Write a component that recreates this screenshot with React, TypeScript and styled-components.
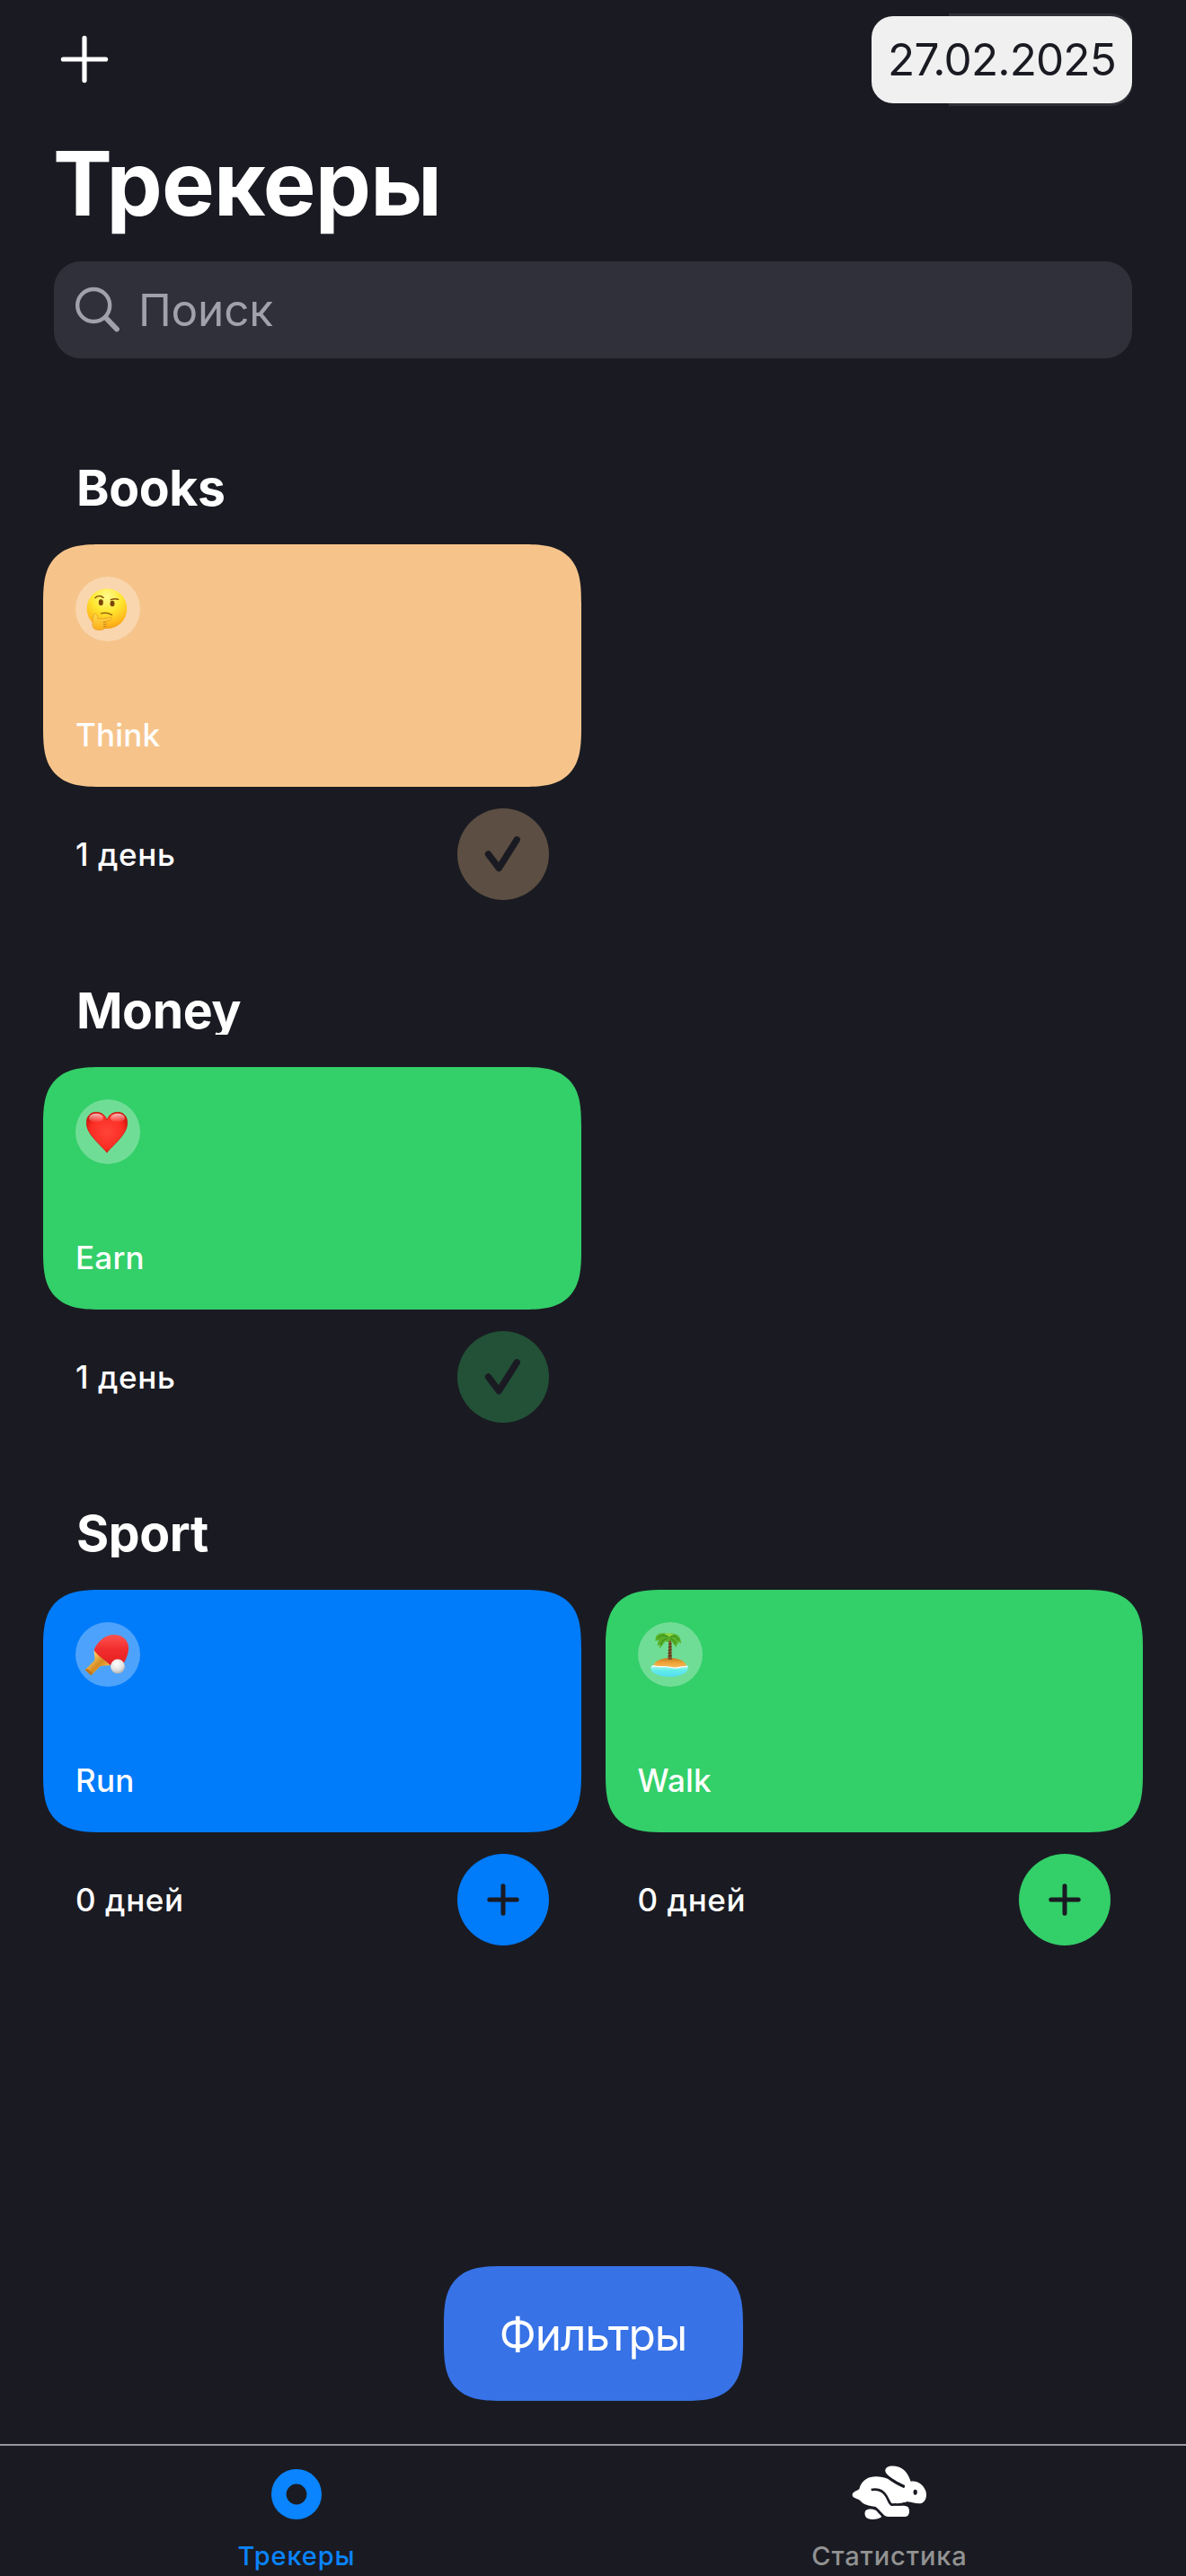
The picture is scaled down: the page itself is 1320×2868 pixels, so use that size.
import React from 'react';
import styled, { createGlobalStyle, css } from 'styled-components';

const colors = {
  background: '#1a1b22',
  field: '#30303a',
  hint: '#a1a1ab',
  white: '#ffffff',
  blue: '#007bfa',
  green: '#33cf69',
  peach: '#f6c48b',
};

const GlobalStyle = createGlobalStyle`
  body {
    margin: 0;
    background: ${colors.background};
  }
  button {
    border: 0;
    padding: 0;
    font: inherit;
  }
`;

const smoothCorners = css`
  border-radius: 48px;
  @supports (corner-shape: squircle) {
    border-radius: 66px;
    corner-shape: superellipse(1.54);
  }
`;

const Screen = styled.div`
  box-sizing: border-box;
  width: 1320px;
  height: 2868px;
  display: flex;
  flex-direction: column;
  overflow: hidden;
  background: ${colors.background};
  color: ${colors.white};
  font-family: Inter, 'Liberation Sans', sans-serif;
`;

const Header = styled.header`
  padding: 15px 60px 0;
`;

const NavBar = styled.div`
  display: flex;
  justify-content: space-between;
  height: 103px;
`;

const AddButton = styled.button`
  width: 68px;
  height: 102px;
  display: flex;
  align-items: center;
  justify-content: center;
  background: none;
`;

const DatePicker = styled.div`
  display: flex;
  align-items: center;
  width: 290px;
  border-radius: 24px;
  background: linear-gradient(${colors.field}, ${colors.field}) right / 204px 100% no-repeat;
`;

const DateValue = styled.time`
  flex: 1;
  height: 97px;
  border-radius: 24px;
  background: #f0f0f0;
  color: ${colors.background};
  font-size: 49.5px;
  line-height: 97px;
  letter-spacing: -0.85px;
  text-align: center;
  white-space: nowrap;
`;

const Title = styled.h1`
  margin: 26px 0 0 -1px;
  font-size: 98.8px;
  font-weight: 700;
  line-height: 120px;
  letter-spacing: -0.8px;
  white-space: nowrap;
`;

const SearchField = styled.div`
  display: flex;
  align-items: center;
  height: 108px;
  margin-top: 27px;
  padding-left: 22px;
  border-radius: 30px;
  background: ${colors.field};
  color: ${colors.hint};
`;

const SearchHint = styled.span`
  margin-left: 18px;
  font-size: 49.5px;
  line-height: 60px;
  letter-spacing: -0.2px;
`;

const Sections = styled.main`
  flex: 1;
  display: flex;
  flex-direction: column;
  gap: 96px;
  padding: 117px 48px 0;
`;

const SectionTitle = styled.h2`
  height: 54px;
  margin: 0 0 36px;
  padding-left: 37px;
  overflow: hidden;
  font-size: 55.3px;
  font-weight: 700;
  line-height: 54px;
  letter-spacing: -0.4px;
`;

const Grid = styled.div`
  display: grid;
  grid-template-columns: 1fr 1fr;
  column-gap: 27px;
`;

const Card = styled.div<{ $color: string }>`
  box-sizing: border-box;
  height: 270px;
  padding: 36px;
  display: flex;
  flex-direction: column;
  justify-content: space-between;
  align-items: flex-start;
  background: ${(p) => p.$color};
  ${smoothCorners}
`;

const EmojiBadge = styled.div`
  width: 72px;
  height: 72px;
  border-radius: 50%;
  background: rgba(255, 255, 255, 0.3);
  svg {
    display: block;
  }
`;

const CardName = styled.span`
  font-size: 35px;
  font-weight: 500;
  line-height: 43px;
  letter-spacing: 0.2px;
`;

const CardFooter = styled.div`
  display: flex;
  align-items: center;
  justify-content: space-between;
  margin-top: 24px;
  padding: 0 36px;
`;

const DayCount = styled.span`
  font-size: 35px;
  font-weight: 500;
  line-height: 43px;
  letter-spacing: 0.6px;
`;

const RoundButton = styled.button<{ $color: string; $done?: boolean }>`
  width: 102px;
  height: 102px;
  border-radius: 50%;
  background: ${(p) => (p.$done ? `color-mix(in srgb, ${p.$color} 30%, ${colors.background})` : p.$color)};
  svg {
    display: block;
  }
`;

const FilterButton = styled.button`
  box-sizing: border-box;
  align-self: center;
  width: 333px;
  height: 150px;
  margin-bottom: 48px;
  padding-top: 2px;
  background: #3772e7;
  color: ${colors.white};
  font-size: 49.5px;
  line-height: 60px;
  letter-spacing: -1.1px;
  ${smoothCorners}
`;

const TabBar = styled.nav`
  box-sizing: border-box;
  height: 147px;
  display: grid;
  grid-template-columns: 1fr 1fr;
  border-top: 2px solid #97979b;
`;

const Tab = styled.div<{ $active?: boolean }>`
  display: flex;
  flex-direction: column;
  align-items: center;
  padding-top: 19px;
  color: ${(p) => (p.$active ? '#0a84ff' : '#929292')};
`;

const TabLabel = styled.span`
  margin-top: 16px;
  font-size: 29px;
  font-weight: 500;
  line-height: 36px;
  letter-spacing: 0.9px;
`;

const PlusIcon = ({ size, arm, stroke, color }: { size: number; arm: number; stroke: number; color: string }) => (
  <svg width={size} height={size} viewBox={`${-size / 2} ${-size / 2} ${size} ${size}`}>
    <path d={`M${-arm} 0H${arm}M0 ${-arm}V${arm}`} stroke={color} strokeWidth={stroke} strokeLinecap="round" />
  </svg>
);

const CheckIcon = () => (
  <svg width="102" height="102" viewBox="0 0 102 102" fill="none">
    <path
      d="M34.5 51L46.3 66.5L66.3 34.8"
      stroke={colors.background}
      strokeWidth="7.4"
      strokeLinecap="round"
      strokeLinejoin="round"
    />
  </svg>
);

const SearchIcon = () => (
  <svg width="54" height="54" viewBox="0 0 54 54" fill="none" stroke={colors.hint} strokeLinecap="round">
    <circle cx="22.2" cy="22" r="18" strokeWidth="4.4" />
    <path d="M35.5 35.5L48 48.5" strokeWidth="5.8" />
  </svg>
);

const ThinkingEmoji = () => (
  <svg width="72" height="72" viewBox="72 66 216 216" fill="none">
    <defs>
      <radialGradient id="face" cx="0.5" cy="0.2" r="0.85">
        <stop offset="0" stopColor="#fffb8f" />
        <stop offset="0.45" stopColor="#ffe62f" />
        <stop offset="0.8" stopColor="#ffb81c" />
        <stop offset="1" stopColor="#ef9314" />
      </radialGradient>
      <linearGradient id="hand" x1="0" y1="0" x2="0" y2="1">
        <stop offset="0" stopColor="#ffdc4a" />
        <stop offset="1" stopColor="#fbae1e" />
      </linearGradient>
    </defs>
    <circle cx="177" cy="173" r="67" fill="url(#face)" />
    <ellipse cx="157" cy="152" rx="7.5" ry="10" fill="#7a4508" />
    <ellipse cx="195" cy="156" rx="7.5" ry="10" fill="#7a4508" />
    <path d="M138 137C144 129 157 129 165 136M190 143C198 140 208 139 215 142" stroke="#8a5209" strokeWidth="4.5" strokeLinecap="round" />
    <path d="M157 189C168 186 182 187 194 194" stroke="#8a5209" strokeWidth="3.5" strokeLinecap="round" />
    <path
      d="M136 190C142 188 145 196 147 206C158 208 174 205 187 202C194 201 194 208 187 211L172 217C176 222 174 229 173 234C170 243 158 245 146 244C134 243 129 236 129 225C129 211 131 192 136 190Z"
      fill="url(#hand)"
      stroke="#e6921a"
      strokeWidth="2"
    />
    <path d="M172 217L164 219M174 225L165 226M173 233L165 233" stroke="#b86d10" strokeWidth="2.5" />
  </svg>
);

const HeartEmoji = () => (
  <svg width="72" height="72" viewBox="72 72 216 216">
    <defs>
      <radialGradient id="heart" cx="0.5" cy="0.48" r="0.58">
        <stop offset="0" stopColor="#ff4439" />
        <stop offset="0.7" stopColor="#fb2d23" />
        <stop offset="1" stopColor="#d0130c" />
      </radialGradient>
      <linearGradient id="shine" x1="0" y1="0" x2="0" y2="1">
        <stop offset="0" stopColor="#fff" stopOpacity="0.7" />
        <stop offset="1" stopColor="#fff" stopOpacity="0" />
      </linearGradient>
    </defs>
    <path
      d="M177 250C170 239 146 219 128 196C116 180 109 167 109 149C109 129 122 115 141 115C158 115 171 124 177 141C183 124 196 115 213 115C232 115 245 129 245 149C245 167 238 180 226 196C208 219 184 239 177 250Z"
      fill="url(#heart)"
      stroke="#c41109"
      strokeWidth="2"
    />
    <ellipse cx="141" cy="134" rx="24" ry="15" fill="url(#shine)" />
    <ellipse cx="213" cy="134" rx="24" ry="15" fill="url(#shine)" />
  </svg>
);

const PingPongEmoji = () => (
  <svg width="72" height="72" viewBox="72 78 216 216">
    <defs>
      <linearGradient id="rubber" x1="0" y1="0" x2="0" y2="1">
        <stop offset="0" stopColor="#ff5350" />
        <stop offset="0.5" stopColor="#f02c2c" />
        <stop offset="1" stopColor="#e62020" />
      </linearGradient>
      <linearGradient id="grip" x1="0" y1="0" x2="1" y2="1">
        <stop offset="0.2" stopColor="#ffd66a" />
        <stop offset="0.55" stopColor="#d48a22" />
        <stop offset="0.8" stopColor="#ffb83e" />
      </linearGradient>
      <radialGradient id="ball" cx="0.42" cy="0.3" r="0.75">
        <stop offset="0" stopColor="#ffffff" />
        <stop offset="0.6" stopColor="#e2e2e2" />
        <stop offset="1" stopColor="#a8a8a8" />
      </radialGradient>
    </defs>
    <path d="M134 172L188 222C176 224 162 222 154 226L125 256L104 238L134 208C139 200 134 188 134 172Z" fill="url(#grip)" />
    <path d="M104 238L110 233L130 249L124 256Z" fill="#bd741c" />
    <path
      d="M134 172C144 142 172 120 202 120C236 121 252 146 249 170C248 184 241 202 234 214L188 221C174 208 145 190 134 172Z"
      fill="url(#rubber)"
    />
    <circle cx="213" cy="226" r="24" fill="url(#ball)" />
  </svg>
);

const IslandEmoji = () => (
  <svg width="72" height="72" viewBox="60 78 216 216" fill="none">
    <defs>
      <linearGradient id="sea" x1="0" y1="0" x2="0" y2="1">
        <stop offset="0" stopColor="#c9f8e6" />
        <stop offset="0.5" stopColor="#63edea" />
        <stop offset="1" stopColor="#52dcf2" />
      </linearGradient>
      <linearGradient id="sand" x1="0" y1="0" x2="0" y2="1">
        <stop offset="0" stopColor="#c97e22" />
        <stop offset="0.5" stopColor="#f0a53a" />
        <stop offset="1" stopColor="#f8bd5e" />
      </linearGradient>
    </defs>
    <path d="M102 231C104 222 112 218 166 218C218 218 226 222 228 231C226 249 200 260 165 260C130 260 104 249 102 231Z" fill="url(#sea)" />
    <path d="M112 222C118 206 142 198 166 198C192 198 216 206 221 222C216 232 204 226 194 230C180 234 170 228 156 226C140 224 124 230 112 222Z" fill="url(#sand)" />
    <path d="M106 227C116 221 124 228 138 227C154 225 168 228 180 231C194 232 200 227 212 227C219 228 224 226 226 224" stroke="#fff" strokeWidth="3.5" />
    <path d="M161 134C166 150 160 176 161 203H174C171 180 175 154 170 134Z" fill="#80532b" />
    <path d="M162 152L172 150M161 162L172 160M161 172L172 170M161 182L172 180M161 192L173 190" stroke="#4d2e16" strokeWidth="3" />
    <path
      d="M162 120C148 112 132 114 123 122C117 128 121 136 117 141C124 139 128 138 130 137C125 145 126 154 125 158L134 152L131 166C140 160 146 148 152 142L160 145L167 139L175 145C178 152 182 156 189 162L189 151L195 154L193 142L204 150C204 138 201 126 190 120C180 114 168 114 162 120Z"
      fill="#58b129"
    />
    <path d="M160 128C148 120 136 121 128 132M158 133C147 134 140 142 136 154M167 128C178 121 190 126 197 139M168 134C176 135 182 142 186 150" stroke="#2b7716" strokeWidth="2.4" />
    <path d="M148 117C160 114 172 116 180 118L166 127Z" fill="#92d63a" />
  </svg>
);

const TrackersIcon = () => (
  <svg width="70" height="70" viewBox="-35 -35 70 70">
    <circle r="19.7" fill="none" stroke="#0a84ff" strokeWidth="16.6" />
  </svg>
);

const RabbitIcon = () => (
  <svg width="88" height="70" viewBox="256 96 264 210" fill="none">
    <path
      d="M264 203C264 194 278 190 287 184C292 162 308 143 340 142C372 141 390 152 418 170L436 180L440 172C420 162 376 140 374 124C372 107 396 102 420 110C442 118 452 138 459 158C482 156 500 168 509 190C515 210 507 232 486 232C470 232 456 224 444 226C436 234 424 238 400 237C424 240 440 236 450 244C458 256 454 276 440 276L384 276C366 276 358 252 340 242C320 240 300 236 290 222C282 214 264 214 264 203Z"
      fill="#fff"
    />
    <path d="M308 256C314 249 334 249 344 256C352 266 359 271 362 276C354 284 330 287 318 283C305 279 303 264 308 256Z" fill="#fff" />
    <path d="M378 140C392 152 412 166 438 176" stroke={colors.background} strokeWidth="8" />
    <path d="M327 186C356 180 370 194 378 208C386 222 388 234 396 236C412 234 426 238 440 231" stroke={colors.background} strokeWidth="8" />
    <ellipse cx="474" cy="194" rx="6.5" ry="9" fill={colors.background} />
  </svg>
);

type Tracker = { name: string; days: string; color: string; done?: boolean; emoji: React.ReactNode };

const sections: { title: string; trackers: Tracker[] }[] = [
  { title: 'Books', trackers: [{ name: 'Think', days: '1 день', color: colors.peach, done: true, emoji: <ThinkingEmoji /> }] },
  { title: 'Money', trackers: [{ name: 'Earn', days: '1 день', color: colors.green, done: true, emoji: <HeartEmoji /> }] },
  {
    title: 'Sport',
    trackers: [
      { name: 'Run', days: '0 дней', color: colors.blue, emoji: <PingPongEmoji /> },
      { name: 'Walk', days: '0 дней', color: colors.green, emoji: <IslandEmoji /> },
    ],
  },
];

const TrackerCell = ({ name, days, color, done, emoji }: Tracker) => (
  <article>
    <Card $color={color}>
      <EmojiBadge>{emoji}</EmojiBadge>
      <CardName>{name}</CardName>
    </Card>
    <CardFooter>
      <DayCount>{days}</DayCount>
      <RoundButton $color={color} $done={done}>
        {done ? <CheckIcon /> : <PlusIcon size={102} arm={15.2} stroke={5} color={colors.background} />}
      </RoundButton>
    </CardFooter>
  </article>
);

export default function App() {
  return (
    <Screen>
      <GlobalStyle />
      <Header>
        <NavBar>
          <AddButton>
            <PlusIcon size={68} arm={23.6} stroke={5.2} color={colors.white} />
          </AddButton>
          <DatePicker>
            <DateValue>27.02.2025</DateValue>
          </DatePicker>
        </NavBar>
        <Title>Трекеры</Title>
        <SearchField>
          <SearchIcon />
          <SearchHint>Поиск</SearchHint>
        </SearchField>
      </Header>
      <Sections>
        {sections.map((section) => (
          <section key={section.title}>
            <SectionTitle>{section.title}</SectionTitle>
            <Grid>
              {section.trackers.map((tracker) => (
                <TrackerCell key={tracker.name} {...tracker} />
              ))}
            </Grid>
          </section>
        ))}
      </Sections>
      <FilterButton>Фильтры</FilterButton>
      <TabBar>
        <Tab $active>
          <TrackersIcon />
          <TabLabel>Трекеры</TabLabel>
        </Tab>
        <Tab>
          <RabbitIcon />
          <TabLabel>Статистика</TabLabel>
        </Tab>
      </TabBar>
    </Screen>
  );
}
